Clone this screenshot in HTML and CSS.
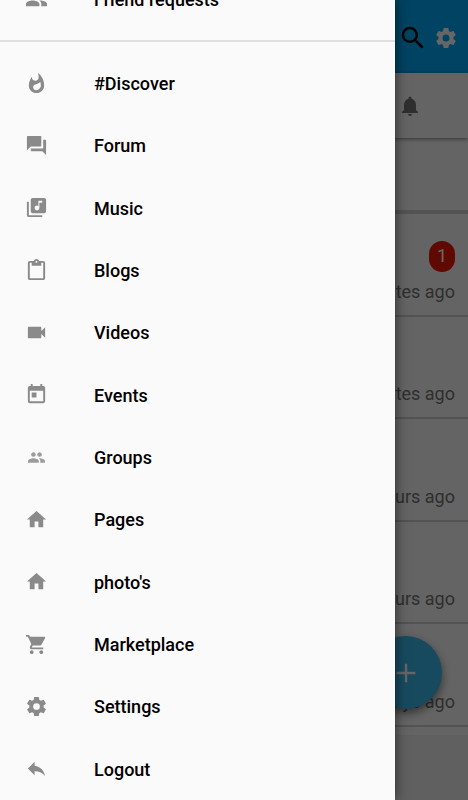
FILE: index.html
```html
<!DOCTYPE html>
<html lang="en">
<head>
<meta charset="utf-8">
<meta name="viewport" content="width=device-width, initial-scale=1">
<title>Menu</title>
<link rel="stylesheet" href="styles.css">
</head>
<body>
<div class="app">
  <main class="page">
    <header class="topbar">
      <button class="icon-button search" type="button" aria-label="Search"><svg viewBox="0 0 24 24"><path d="M15.5 14h-.79l-.28-.27A6.47 6.47 0 0 0 16 9.500A6.500 6.500 0 1 0 9.500 16c1.610 0 3.090-.59 4.230-1.570l.27.28v.79l5 4.990L20.490 19l-4.990-5zm-6 0C7.010 14 5 11.990 5 9.500S7.010 5 9.500 5 14 7.010 14 9.500 11.990 14 9.500 14z"/></svg></button>
      <button class="icon-button" type="button" aria-label="Settings"><svg viewBox="0 0 24 24"><use href="#gear"/></svg></button>
    </header>
    <nav class="tabs">
      <button class="icon-button" type="button" aria-label="Notifications"><svg viewBox="0 0 24 24"><path d="M12 22c1.100 0 2-.9 2-2h-4c0 1.100.9 2 2 2zm6-6v-5c0-3.070-1.640-5.640-4.500-6.320V4a1.500 1.500 0 0 0-3 0v.68C7.630 5.360 6 7.920 6 11v5l-2 2v1h16v-1l-2-2z"/></svg></button>
    </nav>
    <section class="stories"></section>
    <ul class="chats">
      <li class="chat"><span class="badge">1</span><span>minutes ago</span></li>
      <li class="chat"><span>minutes ago</span></li>
      <li class="chat"><span>hours ago</span></li>
      <li class="chat"><span>hours ago</span></li>
      <li class="chat"><span>days ago</span></li>
    </ul>
    <footer class="page-end"></footer>
    <button class="fab" type="button" aria-label="New chat"><svg viewBox="0 0 24 24"><path d="M12 4v16M4 12h16"/></svg></button>
  </main>
  <div class="scrim"></div>
  <nav class="drawer">
    <a class="item item-top" href="#"><svg viewBox="0 0 24 24"><use href="#people"/></svg>Friend requests</a>
    <hr class="divider">
    <div class="menu">
      <a class="item" href="#"><svg viewBox="0 0 24 24"><path d="M13.500.67s.74 2.650.74 4.800c0 2.060-1.350 3.730-3.410 3.730-2.070 0-3.630-1.670-3.630-3.730l.03-.36C5.210 7.510 4 10.620 4 14c0 4.420 3.580 8 8 8s8-3.580 8-8C20 8.610 17.410 3.800 13.500.67zM11.710 19c-1.780 0-3.220-1.400-3.220-3.140 0-1.620 1.050-2.760 2.810-3.120 1.770-.36 3.600-1.210 4.620-2.580.39 1.290.59 2.650.59 4.040 0 2.650-2.150 4.800-4.800 4.800z"/></svg>#Discover</a>
      <a class="item" href="#"><svg viewBox="0 0 24 24"><path d="M21 6h-2v9H6v2c0 .55.45 1 1 1h11l4 4V7c0-.55-.45-1-1-1zm-4 6V3c0-.55-.45-1-1-1H3c-.55 0-1 .45-1 1v14l4-4h10c.55 0 1-.45 1-1z"/></svg>Forum</a>
      <a class="item" href="#"><svg viewBox="0 0 24 24"><path d="M20 2H8c-1.100 0-2 .9-2 2v12c0 1.100.9 2 2 2h12c1.100 0 2-.9 2-2V4c0-1.100-.9-2-2-2zm-2 5h-3v5.500a2.500 2.500 0 1 1-2.500-2.500c.57 0 1.080.19 1.500.51V5h4v2zM4 6H2v14c0 1.100.9 2 2 2h14v-2H4V6z"/></svg>Music</a>
      <a class="item" href="#"><svg viewBox="0 0 24 24"><path d="M19 2h-4.180C14.400.84 13.300 0 12 0S9.600.84 9.180 2H5c-1.100 0-2 .9-2 2v16c0 1.100.9 2 2 2h14c1.100 0 2-.9 2-2V4c0-1.100-.9-2-2-2zm-7 0c.55 0 1 .45 1 1s-.45 1-1 1-1-.45-1-1 .45-1 1-1zm7 18H5V4h2v3h10V4h2v16z"/></svg>Blogs</a>
      <a class="item" href="#"><svg viewBox="0 0 24 24"><path d="M17 10.500V7c0-.55-.45-1-1-1H4c-.55 0-1 .45-1 1v10c0 .55.45 1 1 1h12c.55 0 1-.45 1-1v-3.500l4 4v-11l-4 4z"/></svg>Videos</a>
      <a class="item" href="#"><svg viewBox="0 0 24 24"><path d="M19 3h-1V1h-2v2H8V1H6v2H5c-1.110 0-1.990.9-1.990 2L3 19a2 2 0 0 0 2 2h14c1.100 0 2-.9 2-2V5c0-1.100-.9-2-2-2zm0 16H5V8h14v11zM7 10h5v5H7z"/></svg>Events</a>
      <a class="item" href="#"><svg class="light" viewBox="-3 -3 30 30"><use href="#people"/></svg>Groups</a>
      <a class="item" href="#"><svg viewBox="0 0 24 24"><path d="M10 20v-6h4v6h5v-8h3L12 3 2 12h3v8z"/></svg>Pages</a>
      <a class="item" href="#"><svg viewBox="0 0 24 24"><path d="M10 20v-6h4v6h5v-8h3L12 3 2 12h3v8z"/></svg>photo's</a>
      <a class="item" href="#"><svg viewBox="0 0 24 24"><path d="M7 18c-1.100 0-1.990.9-1.990 2S5.900 22 7 22s2-.9 2-2-.9-2-2-2zM1 2v2h2l3.600 7.590-1.350 2.450c-.16.28-.25.61-.25.96 0 1.100.9 2 2 2h12v-2H7.420a.25.25 0 0 1-.25-.25l.03-.12.9-1.630h7.450c.75 0 1.410-.41 1.750-1.030l3.580-6.490A1 1 0 0 0 20 4H5.210l-.94-2H1zm16 16c-1.100 0-1.990.9-1.990 2s.89 2 1.990 2 2-.9 2-2-.9-2-2-2z"/></svg>Marketplace</a>
      <a class="item" href="#"><svg viewBox="0 0 24 24"><path id="gear" d="M19.430 12.980c.04-.32.07-.64.07-.98s-.03-.66-.07-.98l2.110-1.650c.19-.15.24-.42.12-.64l-2-3.460c-.12-.22-.39-.3-.61-.22l-2.490 1c-.52-.4-1.080-.73-1.690-.98l-.38-2.650A.49.49 0 0 0 14 2h-4c-.25 0-.46.18-.49.42l-.38 2.650c-.61.25-1.170.59-1.690.98l-2.490-1c-.23-.09-.49 0-.61.22l-2 3.460c-.13.22-.07.49.12.64l2.110 1.650c-.04.32-.07.65-.07.98s.03.66.07.98l-2.110 1.650c-.19.15-.24.42-.12.64l2 3.460c.12.22.39.3.61.22l2.490-1c.52.4 1.080.73 1.690.98l.38 2.650c.03.24.24.42.49.42h4c.25 0 .46-.18.49-.42l.38-2.650c.61-.25 1.170-.59 1.690-.98l2.490 1c.23.09.49 0 .61-.22l2-3.460c.12-.22.07-.49-.12-.64l-2.110-1.650zM12 15.500a3.500 3.500 0 1 1 0-7 3.500 3.500 0 0 1 0 7z"/></svg>Settings</a>
      <a class="item" href="#"><svg viewBox="0 0 24 24"><path d="M10 9V5l-7 7 7 7v-4.100c5 0 8.500 1.600 11 5.100-1-5-4-10-11-11z"/></svg>Logout</a>
    </div>
  </nav>
</div>
<svg class="defs" aria-hidden="true"><defs><path id="people" d="M16 11c1.660 0 2.990-1.340 2.990-3S17.660 5 16 5s-3 1.340-3 3 1.340 3 3 3zm-8 0c1.660 0 2.990-1.340 2.990-3S9.660 5 8 5 5 6.340 5 8s1.340 3 3 3zm0 2c-2.330 0-7 1.170-7 3.500V19h14v-2.500c0-2.330-4.670-3.500-7-3.500zm8 0c-.29 0-.62.02-.97.05 1.160.84 1.970 1.970 1.970 3.450V19h6v-2.500c0-2.330-4.670-3.500-7-3.500z"/></defs></svg>
</body>
</html>
```
FILE: styles.css
```css
* {
  box-sizing: border-box;
}

body {
  margin: 0;
  font-family: Roboto, "Liberation Sans", sans-serif;
  font-size: 18px;
  line-height: 24px;
  color: #000;
}

button {
  margin: 0;
  padding: 0;
  border: 0;
  background: none;
  font: inherit;
}

svg {
  display: block;
  fill: currentColor;
}

.app {
  position: relative;
  min-height: 100vh;
  overflow: hidden;
}

.page {
  position: relative;
  display: flex;
  flex-direction: column;
  min-height: 100vh;
  background: #fafafa;
}

.topbar {
  display: flex;
  align-items: center;
  justify-content: flex-end;
  gap: 6px;
  height: 73px;
  padding: 2px 10px 0 0;
  background: #03a9f4;
}

.icon-button svg {
  width: 24px;
  height: 24px;
}

.topbar .icon-button {
  color: #fff;
}

.topbar .search {
  color: #000;
}

.search svg {
  width: 30px;
  height: 30px;
}

.tabs {
  display: flex;
  align-items: center;
  justify-content: flex-end;
  height: 65px;
  padding-right: 46px;
  box-shadow: 0 1px 4px rgba(0, 0, 0, 0.5);
}

.tabs .icon-button {
  color: #757575;
}

.stories {
  height: 76px;
  border-bottom: 4px solid #d0d0d0;
}

.chats {
  display: grid;
  grid-auto-rows: 1fr;
  flex: 1;
  margin: 0;
  padding: 0;
  list-style: none;
}

.chat {
  display: flex;
  flex-direction: column;
  align-items: flex-end;
  justify-content: flex-end;
  gap: 8px;
  padding: 0 13px 11px 0;
  border-bottom: 2px solid #d0d0d0;
  color: #757575;
}

.badge {
  display: flex;
  align-items: center;
  justify-content: center;
  width: 26px;
  height: 31px;
  border-radius: 13px;
  background: #f01800;
  color: #fff;
}

.page-end {
  height: 73px;
  border-top: 8px solid #fafafa;
  background: #f0f0f0;
}

.fab {
  position: absolute;
  right: 26px;
  bottom: 91px;
  display: grid;
  place-items: center;
  width: 73px;
  height: 73px;
  border-radius: 50%;
  background: #3cb8ee;
  box-shadow: 0 4px 10px rgba(0, 0, 0, 0.5);
  color: #fff;
}

.fab svg {
  width: 28px;
  height: 28px;
  stroke: currentColor;
  stroke-width: 2;
}

.scrim {
  position: absolute;
  inset: 0;
  background: rgba(0, 0, 0, 0.6);
}

.drawer {
  position: absolute;
  inset: 0 73px 0 0;
  display: flex;
  flex-direction: column;
  background: #fafafa;
  box-shadow: 0 0 12px rgba(0, 0, 0, 0.6);
}

.item {
  display: flex;
  align-items: center;
  gap: 46px;
  padding: 2px 0 0 25px;
  color: #000;
  font-weight: 500;
  text-decoration: none;
}

.item svg {
  width: 23px;
  height: 23px;
  margin-bottom: 2px;
  color: #8a8a8a;
}

.item .light {
  color: #9c9c9c;
}

.item-top {
  flex: none;
  height: 62px;
  margin-top: -32px;
}

.divider {
  width: 100%;
  height: 2px;
  margin: 10px 0;
  border: 0;
  background: #e0e0e0;
}

.menu {
  display: grid;
  grid-auto-rows: 1fr;
  flex: 1;
}

.defs {
  position: absolute;
  width: 0;
  height: 0;
}
```
